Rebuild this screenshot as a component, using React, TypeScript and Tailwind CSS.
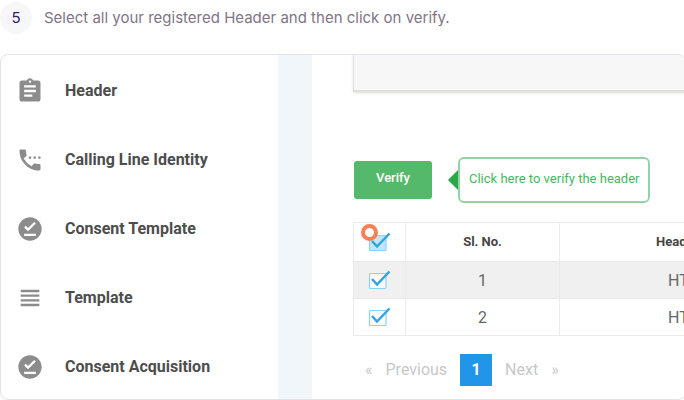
import type { IconType } from "react-icons";
import {
  MdAssignment,
  MdOfflinePin,
  MdSettingsPhone,
  MdViewHeadline,
} from "react-icons/md";

interface IMenuItem {
  label: string;
  icon: IconType;
}

const menu: IMenuItem[] = [
  { label: "Header", icon: MdAssignment },
  { label: "Calling Line Identity", icon: MdSettingsPhone },
  { label: "Consent Template", icon: MdOfflinePin },
  { label: "Template", icon: MdViewHeadline },
  { label: "Consent Acquisition", icon: MdOfflinePin },
];

const rows = [
  { id: 1, header: "HT" },
  { id: 2, header: "HT" },
];

function CheckBox({ label, filled }: { label: string; filled?: boolean }) {
  return (
    <label className="relative mx-auto block h-5 w-6">
      <input
        type="checkbox"
        defaultChecked
        aria-label={label}
        className="absolute inset-0 m-0 cursor-pointer appearance-none"
      />
      <svg
        viewBox="0 0 24 20"
        fill="none"
        className="pointer-events-none h-5 w-6"
      >
        <rect
          x="1.5"
          y="3.5"
          width="16.5"
          height="15"
          rx="1"
          fill={filled ? "#bfe6fc" : "#f8fcff"}
          stroke="#8fd0f7"
          strokeWidth="1.2"
        />
        <path d="M4 9 9 14.5 21.5 1.5" stroke="#36a3e0" strokeWidth="2.5" />
      </svg>
    </label>
  );
}

function Sidebar() {
  return (
    <nav className="w-[277px] shrink-0 pt-3 pb-2">
      <ul className="flex flex-col gap-[21px]">
        {menu.map(({ label, icon: Icon }) => (
          <li key={label}>
            <a
              href="#"
              className="flex h-12 items-center gap-[21px] pl-[15px] text-base font-bold text-[#4d4d4d]"
            >
              <Icon className="size-7 text-[#8c8c8c]" />
              {label}
            </a>
          </li>
        ))}
      </ul>
    </nav>
  );
}

function HeaderTable() {
  return (
    <table className="mt-[19px] w-[440px] table-fixed border-collapse border border-[#e9ecef] text-center text-[#666]">
      <colgroup>
        <col className="w-[52px]" />
        <col className="w-[154px]" />
        <col />
      </colgroup>
      <thead>
        <tr className="h-[39px] text-[13px] font-bold text-[#444]">
          <th className="border border-[#e9ecef] p-0">
            <div className="relative">
              <CheckBox label="Select all" filled />
              <span className="absolute -top-2 left-[7px] size-[17px] rounded-full border-4 border-[#fb8052] bg-white" />
            </div>
          </th>
          <th className="border border-[#e9ecef] p-0">Sl. No.</th>
          <th className="border border-[#e9ecef] p-0 pl-24 text-left">Header</th>
        </tr>
      </thead>
      <tbody>
        {rows.map((r) => (
          <tr key={r.id} className="h-[37px] text-base odd:bg-[#f0f0f0]">
            <td className="border border-[#e9ecef] p-0">
              <CheckBox label={`Select row ${r.id}`} />
            </td>
            <td className="border border-[#e9ecef] p-0 pt-0.5">{r.id}</td>
            <td className="border border-[#e9ecef] p-0 pt-0.5 pl-[108px] text-left">
              {r.header}
            </td>
          </tr>
        ))}
      </tbody>
    </table>
  );
}

function Pagination() {
  return (
    <nav className="mt-[18px] flex h-8 items-center pl-3 text-base text-[#c8c8c8]">
      <button type="button" className="flex gap-[13px]">
        <span>«</span>
        <span>Previous</span>
      </button>
      <button
        type="button"
        className="mx-[13px] size-8 bg-[#2196e8] font-bold text-white"
      >
        1
      </button>
      <button type="button" className="flex gap-[13px]">
        <span>Next</span>
        <span>»</span>
      </button>
    </nav>
  );
}

export default function App() {
  return (
    <main className="overflow-hidden bg-white font-['Roboto',sans-serif]">
      <header className="flex items-center gap-3 pt-0.5 font-['Inter',sans-serif] text-[15px] text-[#7f7487]">
        <span className="flex size-8 items-center justify-center rounded-full bg-[#f7f7fa] text-[#2f2266]">
          5
        </span>
        <p>Select all your registered Header and then click on verify.</p>
      </header>

      <section className="mt-5 -mr-0.5 flex overflow-hidden rounded-lg border border-[#e3e2ea]">
        <Sidebar />
        <div className="w-[34px] shrink-0 bg-[#f0f6fa]" />
        <div className="min-w-0 flex-1 overflow-hidden pl-[41px]">
          <div className="h-[37px] w-[440px] border-b-2 border-l border-[#e0e0da] bg-[#f7f7f7] shadow-sm" />

          <div className="mt-[65px] flex items-center">
            <button
              type="button"
              className="ml-px h-[38px] w-[78px] shrink-0 rounded-[3px] bg-[#54b96b] pb-1 text-[13px] font-medium text-white"
            >
              Verify
            </button>
            <svg
              viewBox="0 0 10 20"
              className="ml-4 h-5 w-2.5 shrink-0 fill-[#2aa847]"
            >
              <path d="M0 10 10 0v20z" />
            </svg>
            <p className="flex h-[46px] shrink-0 items-center rounded-md border-2 border-[#94d3a4] px-[9px] pb-0.5 text-[13px] whitespace-nowrap text-[#45b75f]">
              Click here to verify the header
            </p>
          </div>

          <HeaderTable />
          <Pagination />
        </div>
      </section>
    </main>
  );
}
